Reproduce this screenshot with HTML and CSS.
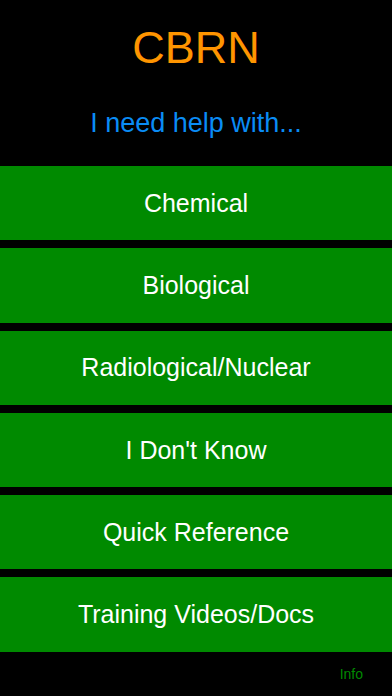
FILE: index.html
```html
<!DOCTYPE html>
<html>
<head>
<meta charset="utf-8">
<link rel="stylesheet" href="styles.css">
</head>
<body>
<div class="screen">
  <header class="header">
    <h1 class="title">CBRN</h1>
    <p class="subtitle">I need help with...</p>
  </header>
  <nav class="menu">
    <a class="menu-btn">Chemical</a>
    <a class="menu-btn">Biological</a>
    <a class="menu-btn">Radiological/Nuclear</a>
    <a class="menu-btn">I Don't Know</a>
    <a class="menu-btn">Quick Reference</a>
    <a class="menu-btn">Training Videos/Docs</a>
  </nav>
  <footer class="footer">
    <a class="info">Info</a>
  </footer>
</div>
</body>
</html>
```
FILE: styles.css
```css
html, body {
  margin: 0;
  padding: 0;
  background: #000;
}
.screen {
  width: 392px;
  height: 696px;
  display: flex;
  flex-direction: column;
  font-family: "Liberation Sans", Arial, sans-serif;
  background: #000;
}
.header {
  height: 166px;
  display: flex;
  flex-direction: column;
  align-items: center;
}
.title {
  margin: 22px 0 0;
  font-weight: normal;
  font-size: 45px;
  line-height: 52px;
  color: #ff9500;
}
.subtitle {
  margin: 33px 0 0;
  font-size: 27px;
  line-height: 32px;
  color: #0a8cf5;
}
.menu {
  display: flex;
  flex-direction: column;
  gap: 8px;
}
.menu-btn {
  height: 74.3px;
  background: #008a00;
  color: #fff;
  font-size: 25px;
  display: flex;
  align-items: center;
  justify-content: center;
}
.footer {
  flex: 1;
  display: flex;
  justify-content: flex-end;
  align-items: center;
  padding-right: 29px;
}
.info {
  color: #008a00;
  font-size: 14px;
}
```
